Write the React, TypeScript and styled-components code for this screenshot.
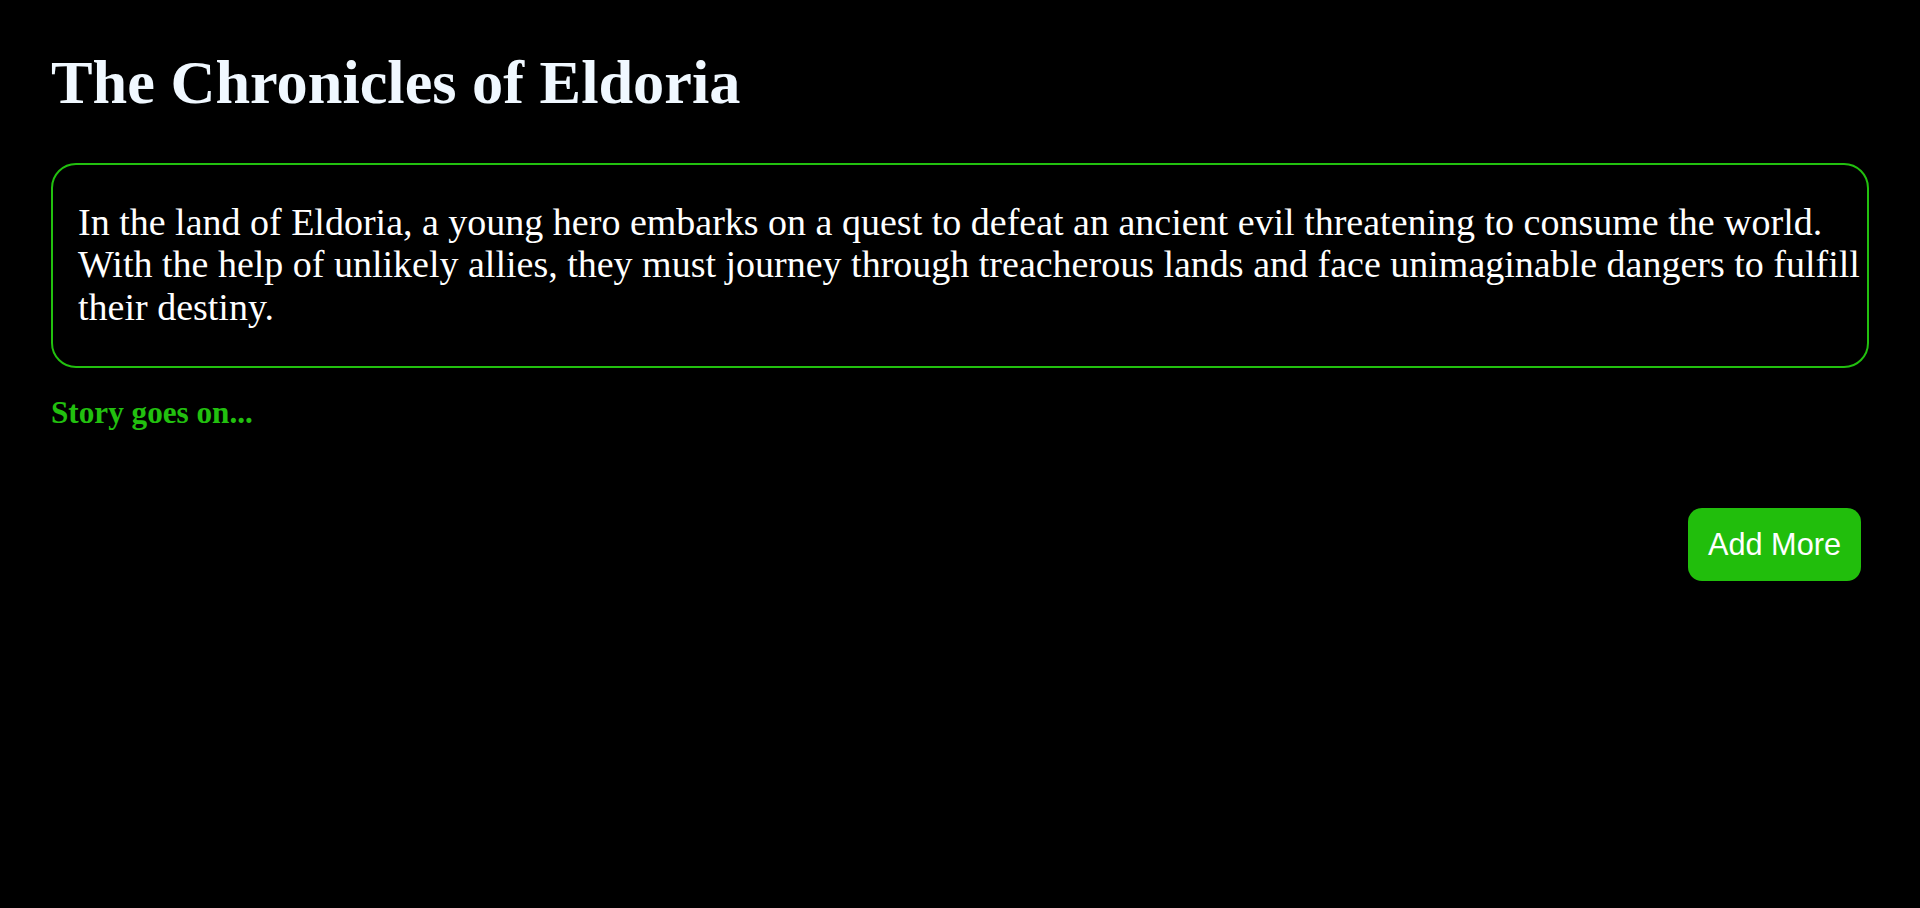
import React from "react";
import styled, { createGlobalStyle } from "styled-components";

const GlobalStyle = createGlobalStyle`
  html, body {
    margin: 0;
    padding: 0;
    background: #000000;
  }
  body {
    font-family: "Liberation Serif", "Times New Roman", serif;
    color: #ffffff;
  }
`;

const Page = styled.main`
  min-height: 908px;
  box-sizing: border-box;
  padding: 47px 51px 40px 51px;
  display: flex;
  flex-direction: column;
  background: #000000;
`;

const Title = styled.h1`
  margin: 0;
  font-family: "Liberation Serif", "Times New Roman", serif;
  font-size: 62.3px;
  font-weight: 700;
  color: #f0f8ff;
  line-height: 70px;
`;

const StoryBox = styled.section`
  margin-top: 46px;
  border: 2px solid #22c00f;
  border-radius: 25px;
  padding: 0 7px 0 25px;
`;

const StoryText = styled.p`
  margin: 36px 0 38px 0;
  font-size: 38px;
  line-height: 42.3px;
  color: #ffffff;
`;

const Continue = styled.p`
  margin: 27px 0 0 0;
  font-size: 31.2px;
  font-weight: 700;
  line-height: 36px;
  color: #22c00f;
`;

const Actions = styled.div`
  display: flex;
  justify-content: flex-end;
  margin-top: 77px;
  padding-right: 8px;
`;

const AddButton = styled.button`
  font-family: "Liberation Sans", Arial, sans-serif;
  font-size: 30.7px;
  line-height: normal;
  color: #ffffff;
  background: #21be0c;
  border: none;
  border-radius: 14px;
  padding: 19px 20px;
  height: 73px;
  box-sizing: border-box;
  cursor: pointer;
`;

export default function App() {
  return (
    <>
      <GlobalStyle />
      <Page>
        <Title>The Chronicles of Eldoria</Title>
        <StoryBox>
          <StoryText>
            In the land of Eldoria, a young hero embarks on a quest to defeat an
            ancient evil threatening to consume the world. With the help of
            unlikely allies, they must journey through treacherous lands and
            face unimaginable dangers to fulfill their destiny.
          </StoryText>
        </StoryBox>
        <Continue>Story goes on...</Continue>
        <Actions>
          <AddButton>Add More</AddButton>
        </Actions>
      </Page>
    </>
  );
}
